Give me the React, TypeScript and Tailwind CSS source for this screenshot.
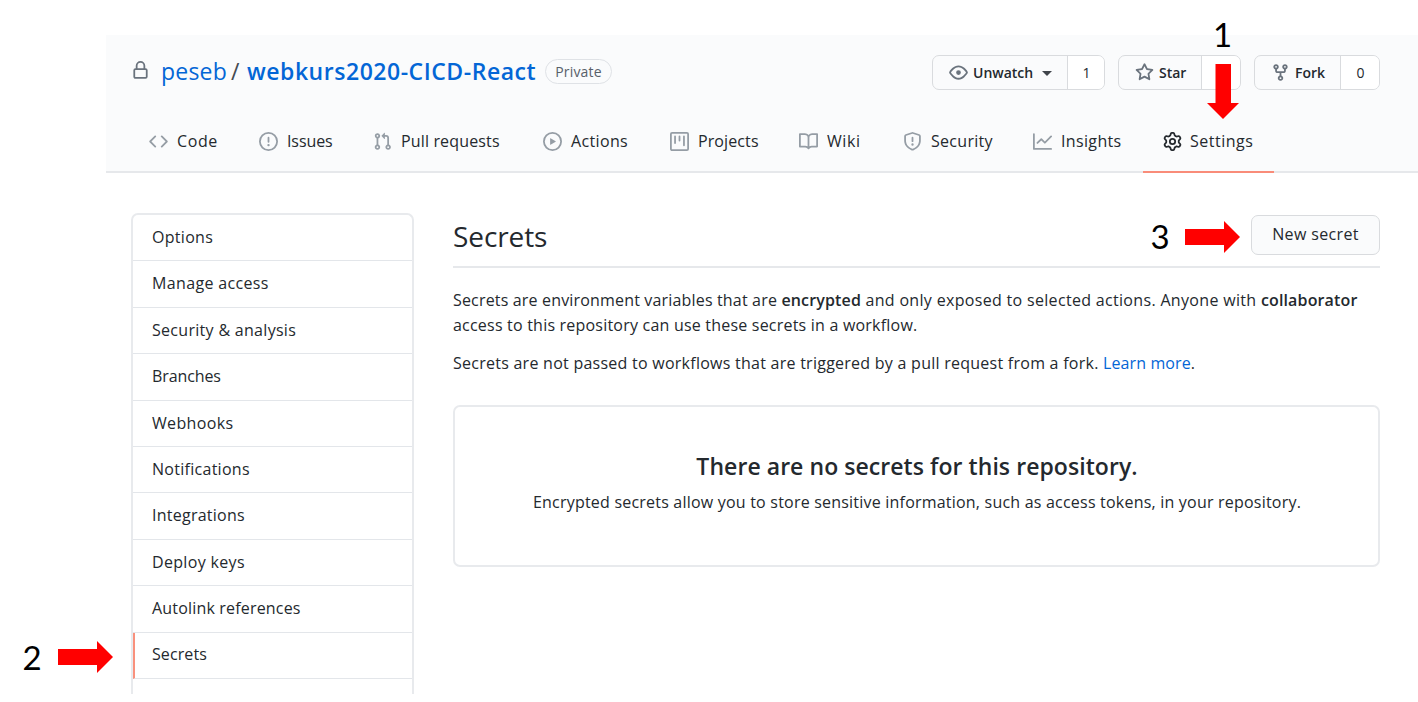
import type { ReactNode } from "react";

const ICONS = {
  lock: "M4 4v2h-.25A1.75 1.75 0 002 7.75v5.5c0 .966.784 1.75 1.75 1.75h8.5A1.75 1.75 0 0014 13.25v-5.5A1.75 1.75 0 0012.25 6H12V4a4 4 0 10-8 0zm6.5 2V4a2.5 2.5 0 10-5 0v2h5zM12 7.5h.25a.25.25 0 01.25.25v5.5a.25.25 0 01-.25.25h-8.5a.25.25 0 01-.25-.25v-5.5a.25.25 0 01.25-.25H12z",
  code: "M4.72 3.22a.75.75 0 011.06 1.06L2.06 8l3.72 3.72a.75.75 0 11-1.06 1.06L.47 8.53a.75.75 0 010-1.06l4.25-4.25zm6.56 0a.75.75 0 10-1.06 1.06L13.94 8l-3.72 3.72a.75.75 0 101.06 1.06l4.25-4.25a.75.75 0 000-1.06l-4.25-4.25z",
  issue: "M8 1.5a6.5 6.5 0 100 13 6.5 6.5 0 000-13zM0 8a8 8 0 1116 0A8 8 0 010 8zm9 3a1 1 0 11-2 0 1 1 0 012 0zm-.25-6.25a.75.75 0 00-1.5 0v3.5a.75.75 0 001.5 0v-3.5z",
  pull: "M7.177 3.073L9.573.677A.25.25 0 0110 .854v4.792a.25.25 0 01-.427.177L7.177 3.427a.25.25 0 010-.354zM3.75 2.5a.75.75 0 100 1.5.75.75 0 000-1.5zm-2.25.75a2.25 2.25 0 113 2.122v5.256a2.251 2.251 0 11-1.5 0V5.372A2.25 2.25 0 011.5 3.25zM11 2.5h-1V4h1a1 1 0 011 1v5.628a2.251 2.251 0 101.5 0V5A2.5 2.5 0 0011 2.5zm1 10.25a.75.75 0 111.5 0 .75.75 0 01-1.5 0zM3.75 12a.75.75 0 100 1.5.75.75 0 000-1.5z",
  play: "M1.5 8a6.5 6.5 0 1113 0 6.5 6.5 0 01-13 0zM8 0a8 8 0 100 16A8 8 0 008 0zM6.379 5.227A.25.25 0 006 5.442v5.117a.25.25 0 00.379.214l4.264-2.559a.25.25 0 000-.428L6.379 5.227z",
  project: "M1.75 0A1.75 1.75 0 000 1.75v12.5C0 15.216.784 16 1.75 16h12.5A1.75 1.75 0 0016 14.25V1.75A1.75 1.75 0 0014.25 0H1.75zM1.5 1.75a.25.25 0 01.25-.25h12.5a.25.25 0 01.25.25v12.5a.25.25 0 01-.25.25H1.75a.25.25 0 01-.25-.25V1.75zM11.75 3a.75.75 0 00-.75.75v7.5a.75.75 0 001.5 0v-7.5a.75.75 0 00-.75-.75zm-8.25.75a.75.75 0 011.5 0v5.5a.75.75 0 01-1.5 0v-5.5zM8 3a.75.75 0 00-.75.75v3.5a.75.75 0 001.5 0v-3.5A.75.75 0 008 3z",
  book: "M0 1.75A.75.75 0 01.75 1h4.253c1.227 0 2.317.59 3 1.501A3.744 3.744 0 0111.006 1h4.245a.75.75 0 01.75.75v10.5a.75.75 0 01-.75.75h-4.507a2.25 2.25 0 00-1.591.659l-.622.621a.75.75 0 01-1.06 0l-.622-.621A2.25 2.25 0 005.258 13H.75a.75.75 0 01-.75-.75V1.75zm8.755 3a2.25 2.25 0 012.25-2.25H14.5v9h-3.757c-.71 0-1.4.201-1.992.572l.004-7.322zm-1.504 7.324l.004-5.073-.002-2.253A2.25 2.25 0 005.003 2.5H1.5v9h3.757a3.75 3.75 0 011.994.574z",
  shield: "M7.467.133a1.75 1.75 0 011.066 0l5.25 1.68A1.75 1.75 0 0115 3.48V7c0 1.566-.32 3.182-1.303 4.682-.983 1.498-2.585 2.813-5.032 3.855a1.7 1.7 0 01-1.33 0c-2.447-1.042-4.049-2.357-5.032-3.855C1.32 10.182 1 8.566 1 7V3.48a1.75 1.75 0 011.217-1.667l5.25-1.68zm.61 1.429a.25.25 0 00-.153 0l-5.25 1.68a.25.25 0 00-.174.238V7c0 1.358.275 2.666 1.057 3.86.784 1.194 2.121 2.34 4.366 3.297a.2.2 0 00.154 0c2.245-.956 3.582-2.104 4.366-3.298C13.225 9.666 13.5 8.36 13.5 7V3.48a.25.25 0 00-.174-.237l-5.25-1.68zM9 10.5a1 1 0 11-2 0 1 1 0 012 0zm-.25-5.75a.75.75 0 10-1.5 0v3a.75.75 0 001.5 0v-3z",
  graph: "M1.5 1.75a.75.75 0 00-1.5 0v12.5c0 .414.336.75.75.75h14.5a.75.75 0 000-1.5H1.5V1.75zm14.28 2.53a.75.75 0 00-1.06-1.06L10 7.94 7.53 5.47a.75.75 0 00-1.06 0L3.22 8.72a.75.75 0 001.06 1.06L7 7.06l2.47 2.47a.75.75 0 001.06 0l5.25-5.25z",
  gear: "M7.429 1.525a6.593 6.593 0 011.142 0c.036.003.108.036.137.146l.289 1.105c.147.56.55.967.997 1.189.174.086.341.183.501.29.417.278.97.423 1.53.27l1.102-.303c.11-.03.175.016.195.046.219.31.41.641.573.989.014.031.022.11-.059.19l-.815.806c-.411.406-.562.957-.53 1.456a4.588 4.588 0 010 .582c-.032.499.119 1.05.53 1.456l.815.806c.08.08.073.159.059.19a6.494 6.494 0 01-.573.99c-.02.029-.086.074-.195.045l-1.103-.303c-.559-.153-1.112-.008-1.529.27-.16.107-.327.204-.5.29-.449.222-.851.628-.998 1.189l-.289 1.105c-.029.11-.101.143-.137.146a6.613 6.613 0 01-1.142 0c-.036-.003-.108-.037-.137-.146l-.289-1.105c-.147-.56-.55-.967-.997-1.189a4.502 4.502 0 01-.501-.29c-.417-.278-.97-.423-1.53-.27l-1.102.303c-.11.03-.175-.016-.195-.046a6.492 6.492 0 01-.573-.989c-.014-.031-.022-.11.059-.19l.815-.806c.411-.406.562-.957.53-1.456a4.587 4.587 0 010-.582c.032-.499-.119-1.05-.53-1.456l-.815-.806c-.08-.08-.073-.159-.059-.19a6.44 6.44 0 01.573-.99c.02-.029.086-.075.195-.045l1.103.303c.559.153 1.112.008 1.529-.27.16-.107.327-.204.5-.29.449-.222.851-.628.998-1.189l.289-1.105c.029-.11.101-.143.137-.146zM8 0c-.236 0-.47.01-.701.03-.743.065-1.29.615-1.458 1.261l-.29 1.106c-.017.066-.078.158-.211.224a5.994 5.994 0 00-.668.386c-.123.082-.233.09-.3.071L3.27 2.776c-.644-.177-1.392.02-1.82.63a7.977 7.977 0 00-.704 1.217c-.315.675-.111 1.422.363 1.891l.815.806c.05.048.098.147.088.294a6.084 6.084 0 000 .772c.01.147-.038.246-.088.294l-.815.806c-.474.469-.678 1.216-.363 1.891.2.428.436.835.704 1.218.428.609 1.176.806 1.82.63l1.103-.303c.066-.019.176-.011.299.071.213.143.436.272.668.386.133.066.194.158.212.224l.289 1.106c.169.646.715 1.196 1.458 1.26a8.094 8.094 0 001.402 0c.743-.064 1.29-.614 1.458-1.26l.29-1.106c.017-.066.078-.158.211-.224a5.98 5.98 0 00.668-.386c.123-.082.233-.09.3-.071l1.102.302c.644.177 1.392-.02 1.82-.63.268-.382.505-.789.704-1.217.315-.675.111-1.422-.364-1.891l-.814-.806c-.05-.048-.098-.147-.088-.294a6.1 6.1 0 000-.772c-.01-.147.039-.246.088-.294l.814-.806c.475-.469.679-1.216.364-1.891a7.992 7.992 0 00-.704-1.218c-.428-.609-1.176-.806-1.82-.63l-1.103.303c-.066.019-.176.011-.299-.071a5.991 5.991 0 00-.668-.386c-.133-.066-.194-.158-.212-.224L10.16 1.29C9.99.645 9.444.095 8.701.031A8.094 8.094 0 008 0zm1.5 8a1.5 1.5 0 11-3 0 1.5 1.5 0 013 0zM11 8a3 3 0 11-6 0 3 3 0 016 0z",
  eye: "M1.679 7.932c.412-.621 1.242-1.75 2.366-2.717C5.175 4.242 6.527 3.5 8 3.5c1.473 0 2.824.742 3.955 1.715 1.124.967 1.954 2.096 2.366 2.717a.119.119 0 010 .136c-.412.621-1.242 1.75-2.366 2.717C10.825 11.758 9.473 12.5 8 12.5c-1.473 0-2.824-.742-3.955-1.715C2.92 9.818 2.09 8.69 1.679 8.068a.119.119 0 010-.136zM8 2c-1.981 0-3.67.992-4.933 2.078C1.797 5.169.88 6.423.43 7.1a1.619 1.619 0 000 1.798c.45.678 1.367 1.932 2.637 3.024C4.329 13.008 6.019 14 8 14c1.981 0 3.67-.992 4.933-2.078 1.27-1.091 2.187-2.345 2.637-3.023a1.619 1.619 0 000-1.798c-.45-.678-1.367-1.932-2.637-3.023C11.671 2.992 9.981 2 8 2zm0 8a2 2 0 100-4 2 2 0 000 4z",
  star: "M8 .25a.75.75 0 01.673.418l1.882 3.815 4.21.612a.75.75 0 01.416 1.279l-3.046 2.97.719 4.192a.75.75 0 01-1.088.791L8 12.347l-3.766 1.98a.75.75 0 01-1.088-.79l.72-4.194L.818 6.374a.75.75 0 01.416-1.28l4.21-.611L7.327.668A.75.75 0 018 .25zm0 2.445L6.615 5.5a.75.75 0 01-.564.41l-3.097.45 2.24 2.184a.75.75 0 01.216.664l-.528 3.084 2.769-1.456a.75.75 0 01.698 0l2.77 1.456-.53-3.084a.75.75 0 01.216-.664l2.24-2.183-3.096-.45a.75.75 0 01-.564-.41L8 2.694v.001z",
  fork: "M5 3.25a.75.75 0 11-1.5 0 .75.75 0 011.5 0zm0 2.122a2.25 2.25 0 10-1.5 0v.878A2.25 2.25 0 005.75 8.5h1.5v2.128a2.251 2.251 0 101.5 0V8.5h1.5a2.25 2.25 0 002.25-2.25v-.878a2.25 2.25 0 10-1.5 0v.878a.75.75 0 01-.75.75h-4.5A.75.75 0 015 6.25v-.878zm3.75 7.378a.75.75 0 11-1.5 0 .75.75 0 011.5 0zm3-8.75a.75.75 0 100-1.5.75.75 0 000 1.5z",
};

type IconName = keyof typeof ICONS;

function Icon({ name, className }: { name: IconName; className: string }) {
  return (
    <svg viewBox="0 0 16 16" fill="currentColor" className={`shrink-0 ${className}`} aria-hidden="true">
      <path fillRule="evenodd" d={ICONS[name]} />
    </svg>
  );
}

const tabs: { icon: IconName; label: string; width: string; tracking: string; active?: boolean }[] = [
  { icon: "code", label: "Code", width: "w-[110px]", tracking: "tracking-[0.6px]" },
  { icon: "issue", label: "Issues", width: "w-[114px]", tracking: "tracking-[-0.1px]" },
  { icon: "pull", label: "Pull requests", width: "w-[170px]", tracking: "tracking-[0.15px]" },
  { icon: "play", label: "Actions", width: "w-[127px]", tracking: "tracking-[0.35px]" },
  { icon: "project", label: "Projects", width: "w-[129px]", tracking: "tracking-[0.1px]" },
  { icon: "book", label: "Wiki", width: "w-[104px]", tracking: "tracking-[0.6px]" },
  { icon: "shield", label: "Security", width: "w-[130px]", tracking: "tracking-[0.3px]" },
  { icon: "graph", label: "Insights", width: "w-[130px]", tracking: "tracking-[0.35px]" },
  { icon: "gear", label: "Settings", width: "w-[131px]", tracking: "tracking-[0.5px]", active: true },
];

const menu = [
  { label: "Options", tracking: "tracking-[0.3px]" },
  { label: "Manage access", tracking: "tracking-[0.35px]" },
  { label: "Security & analysis", tracking: "tracking-[0.3px]" },
  { label: "Branches", tracking: "tracking-[-0.1px]" },
  { label: "Webhooks", tracking: "tracking-[0.35px]" },
  { label: "Notifications", tracking: "tracking-[0.28px]" },
  { label: "Integrations", tracking: "tracking-[0.25px]" },
  { label: "Deploy keys", tracking: "tracking-[0.33px]" },
  { label: "Autolink references", tracking: "tracking-[0.18px]" },
  { label: "Secrets", tracking: "tracking-[0.1px]", active: true },
];

function SocialButton({
  icon,
  label,
  count,
  main,
  total,
  iconGap,
  caret,
}: {
  icon: IconName;
  label: string;
  count: string;
  main: string;
  total: string;
  iconGap: string;
  caret?: boolean;
}) {
  return (
    <div className={`flex h-[35px] overflow-hidden rounded-[7px] border-[1.5px] border-[#d9dbde] text-sm font-semibold ${total}`}>
      <div className={`flex items-center border-r border-[#d9dbde] pl-4 ${main} ${iconGap}`}>
        <Icon name={icon} className="size-[19px] text-[#6a737d]" />
        <span>{label}</span>
        {caret && <span className="mt-0.5 ml-[4px] border-x-[5px] border-t-[5px] border-x-transparent border-t-[#40454b]" />}
      </div>
      <div className="flex flex-1 items-center justify-center bg-white pl-px font-medium">{count}</div>
    </div>
  );
}

function Callout({ n, className, children }: { n: string; className: string; children: ReactNode }) {
  return (
    <div className={`absolute flex items-center font-[Lato,sans-serif] text-[33px] leading-none text-black ${className}`}>
      <span>{n}</span>
      {children}
    </div>
  );
}

function RightArrow() {
  return (
    <svg viewBox="0 0 55 32" className="h-8 w-[55px]" aria-hidden="true">
      <path fill="#ff0000" d="M0 8h39V0l16 16-16 16v-8H0z" />
    </svg>
  );
}

export default function App() {
  return (
    <div className="relative h-[702px] w-[1418px] overflow-hidden bg-white pt-[35px] pl-[106px] font-['Open_Sans',sans-serif] text-base text-[#24292e]">
      <header className="h-[138px] border-b-2 border-[#e6e8eb] bg-[#fafbfc] pt-5">
        <div className="flex h-[35px] items-center pr-[38px] pl-[25px]">
          <Icon name="lock" className="size-[19px] -translate-y-0.5 text-[#6a737d]" />
          <div className="ml-[11px] flex items-center pb-0.5 text-[23px] text-[#0366d6]">
            <span className="w-[70px] tracking-[0.2px]">peseb</span>
            <span className="w-[16px] text-[#444b52]">/</span>
            <span className="w-[298px] font-semibold tracking-[0.53px]">webkurs2020-CICD-React</span>
          </div>
          <span className="mb-0.5 flex h-[25px] w-[67px] items-center justify-center rounded-full border border-[#dfe2e6] text-sm tracking-[0.2px] text-[#586069]">
            Private
          </span>
          <div className="ml-auto flex gap-[13px]">
            <SocialButton icon="eye" label="Unwatch" count="1" total="w-[173px]" main="w-[135px]" iconGap="gap-[5px]" caret />
            <SocialButton icon="star" label="Star" count="" total="w-[123px]" main="w-[83px]" iconGap="gap-[5px]" />
            <SocialButton icon="fork" label="Fork" count="0" total="w-[126px]" main="w-[86px]" iconGap="gap-[5px]" />
          </div>
        </div>
        <nav className="mt-[21px] flex h-[62px] pl-[23px]">
          {tabs.map((t) => (
            <div
              key={t.label}
              className={`flex items-center whitespace-nowrap border-b-2 pl-[20px] ${t.width} ${
                t.active ? "gap-2 border-[#f98c79] font-medium" : "gap-[9px] border-transparent"
              }`}
            >
              <Icon name={t.icon} className={t.active ? "size-[19px] text-[#24292e]" : "size-[19px] text-[#959da5]"} />
              <span className={t.tracking}>{t.label}</span>
            </div>
          ))}
        </nav>
      </header>

      <div className="flex items-start pt-10 pl-[25px]">
        <aside className="h-[481px] w-[283px] overflow-hidden rounded-t-[7px] border-2 border-b-0 border-[#e8eaed]">
          {menu.map((m) => (
            <div
              key={m.label}
              className={`flex h-[46.4px] items-center border-b border-[#e3e6ea] pb-[1.5px] ${m.active ? "border-l-2 border-l-[#f9917d] pl-[17px]" : "pl-[19px]"} ${m.tracking}`}
            >
              {m.label}
            </div>
          ))}
        </aside>

        <main className="ml-[39px] w-[927px]">
          <div className="flex h-[55px] items-start justify-between border-b-2 border-[#e6e8eb]">
            <h1 className="text-[28px] leading-[47px] tracking-[-0.1px]">Secrets</h1>
            <button className="mt-[2px] h-[40px] w-[129px] rounded-[7px] border-[1.5px] border-[#d9dbde] bg-[#fafbfc] pb-0.5 font-medium tracking-[0.35px]">
              New secret
            </button>
          </div>
          <p className="mt-5 leading-[25px] whitespace-nowrap">
            <span className="tracking-[0.17px]">Secrets are environment variables that are </span>
            <strong className="font-semibold tracking-[0.15px]">encrypted</strong>
            <span className="tracking-[0.32px]"> and only exposed to selected actions. Anyone with </span>
            <strong className="font-semibold tracking-[0.15px]">collaborator</strong>
            <br />
            <span className="tracking-[0.21px]">access to this repository can use these secrets in a workflow.</span>
          </p>
          <p className="mt-[13px] leading-[25px] whitespace-nowrap">
            <span className="tracking-[0.255px]">
              Secrets are not passed to workflows that are triggered by a pull request from a fork.{" "}
            </span>
            <a className="tracking-[0.1px] text-[#0366d6]">Learn more</a>.
          </p>
          <section className="mt-[29px] h-[162px] rounded-[7px] border-2 border-[#e8eaed] pt-[43px] pl-px text-center">
            <h2 className="text-[23px] leading-[32px] font-semibold tracking-[0.06px]">
              There are no secrets for this repository.
            </h2>
            <p className="mt-[7px] leading-[26px] tracking-[0.21px]">
              Encrypted secrets allow you to store sensitive information, such as access tokens, in your repository.
            </p>
          </section>
        </main>
      </div>

      <Callout n="1" className="top-[18px] left-[1206.5px] w-8 flex-col">
        <svg viewBox="0 0 32 55" className="mt-[13px] h-[55px] w-8" aria-hidden="true">
          <path fill="#ff0000" d="M8.5 0v39H0l16 16 16-16h-8V0z" />
        </svg>
      </Callout>
      <Callout n="2" className="top-[640.5px] left-[22.5px] gap-[16px]">
        <RightArrow />
      </Callout>
      <Callout n="3" className="top-[220px] left-[1150.5px] gap-[15px]">
        <RightArrow />
      </Callout>
    </div>
  );
}
